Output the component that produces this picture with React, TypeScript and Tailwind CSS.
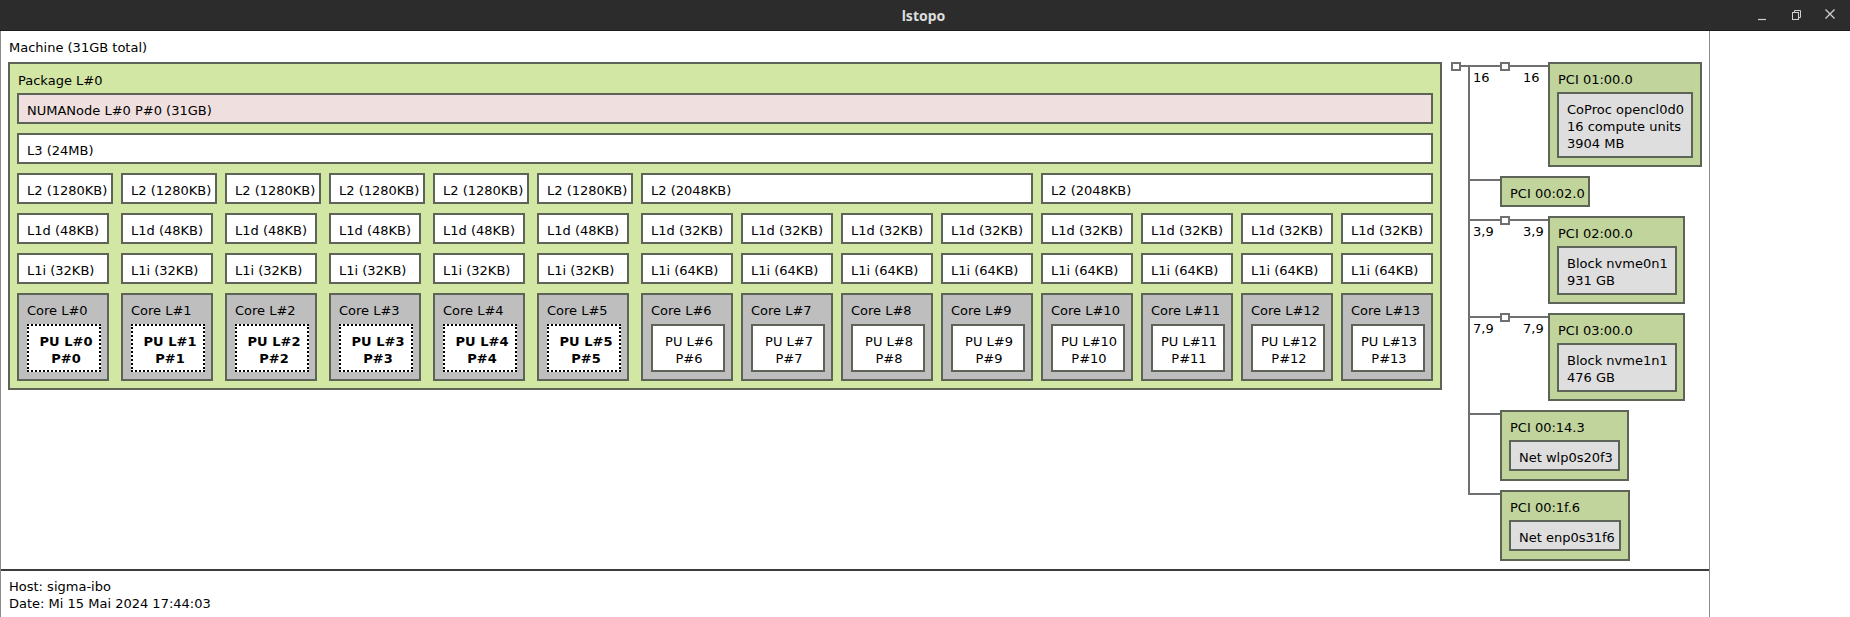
import React from "react";

const edge = "border-2 border-[#5d6356]";

const Cache = ({ label, w }: { label: string; w: string }) => (
  <div className={`h-[31px] ${w} ${edge} bg-white pl-[8px] pt-[8px] whitespace-nowrap`}>
    {label}
  </div>
);

const Core = ({ n }: { n: number }) => {
  const bound = n < 6;
  return (
    <div className={`h-[88px] w-[92px] ${edge} bg-[#bebebe] pl-[8px] pt-[8px]`}>
      <div className="whitespace-nowrap">Core L#{n}</div>
      <div
        className={
          bound
            ? "mt-[6px] h-[48px] w-[74px] border-2 border-dotted border-black bg-white pl-[4px] pt-[7px] text-center font-bold leading-[17px]"
            : "mt-[6px] h-[48px] w-[74px] border-2 border-[#5d6356] bg-white pl-[2px] pt-[7px] text-center leading-[17px]"
        }
      >
        <div>PU L#{n}</div>
        <div>P#{n}</div>
      </div>
    </div>
  );
};

const PCore = ({ n }: { n: number }) => (
  <div className="flex w-[96px] flex-col gap-[9px]">
    <Cache label="L2 (1280KB)" w="w-[96px]" />
    <Cache label="L1d (48KB)" w="w-[92px]" />
    <Cache label="L1i (32KB)" w="w-[92px]" />
    <Core n={n} />
  </div>
);

const ECluster = ({ cores }: { cores: number[] }) => (
  <div className="flex w-[392px] flex-col gap-[9px]">
    <Cache label="L2 (2048KB)" w="w-full" />
    <div className="flex gap-2">
      {cores.map((n) => (
        <div key={n} className="flex w-[92px] flex-col gap-[9px]">
          <Cache label="L1d (32KB)" w="w-[92px]" />
          <Cache label="L1i (64KB)" w="w-[92px]" />
          <Core n={n} />
        </div>
      ))}
    </div>
  </div>
);

const Package = () => (
  <div className={`w-[1434px] ${edge} bg-[#d2e7a4] px-[7px] pt-[9px] pb-[7px]`}>
    <div className="mb-[5px] ml-px">Package L#0</div>
    <div className="flex flex-col gap-[9px]">
      <div className={`h-[31px] w-full ${edge} bg-[#efdfde] pl-[8px] pt-[8px]`}>
        NUMANode L#0 P#0 (31GB)
      </div>
      <Cache label="L3 (24MB)" w="w-full" />
      <div className="flex gap-2">
        {[0, 1, 2, 3, 4, 5].map((n) => (
          <PCore key={n} n={n} />
        ))}
        <ECluster cores={[6, 7, 8, 9]} />
        <ECluster cores={[10, 11, 12, 13]} />
      </div>
    </div>
  </div>
);

// connector from the vertical trunk to one PCI box
const Branch = ({
  bridge,
  speed,
  first,
  last,
  children,
}: {
  bridge?: boolean;
  speed?: string;
  first?: boolean;
  last?: boolean;
  children: React.ReactNode;
}) => (
  <div className="flex">
    <div className={`relative shrink-0 ${bridge ? "w-[80px]" : "w-[32px]"}`}>
      <div
        className={`absolute left-0 w-[2px] bg-[#707070] ${
          first ? "top-[3px] bottom-0" : last ? "top-0 h-[5px]" : "top-0 bottom-0"
        }`}
      />
      <div className="absolute left-0 right-0 top-[3px] h-[2px] bg-[#707070]" />
      {bridge && (
        <>
          <div className="absolute left-[32px] top-0 h-[9px] w-[10px] border-2 border-[#707070] bg-white" />
          <span className="absolute left-[5px] top-[8px]">{speed}</span>
          <span className="absolute left-[55px] top-[8px]">{speed}</span>
        </>
      )}
    </div>
    <div className={last ? "" : "pb-[9px]"}>{children}</div>
  </div>
);

const Pci = ({
  title,
  w,
  h,
  children,
}: {
  title: string;
  w: string;
  h: string;
  children?: React.ReactNode;
}) => (
  <div className={`${w} ${h} ${edge} bg-[#c1d49b] pl-[7px] pt-[8px]`}>
    <div className="ml-px whitespace-nowrap">{title}</div>
    {children}
  </div>
);

const OsDev = ({ w, h, lines }: { w: string; h: string; lines: string[] }) => (
  <div className={`mt-[5px] ${w} ${h} ${edge} bg-[#dedede] pl-[8px] pt-[7px] leading-[17px] whitespace-nowrap`}>
    {lines.map((l) => (
      <div key={l}>{l}</div>
    ))}
  </div>
);

const IoTree = () => (
  <div className="flex">
    <div className="relative h-[9px] w-[17px] shrink-0">
      <div className="absolute left-[10px] top-[3px] h-[2px] w-[7px] bg-[#707070]" />
      <div className="absolute left-0 top-0 h-[9px] w-[10px] border-2 border-[#707070] bg-white" />
    </div>
    <div className="flex flex-col">
      <Branch bridge speed="16" first>
        <Pci title="PCI 01:00.0" w="w-[154px]" h="h-[105px]">
          <OsDev w="w-[136px]" h="h-[66px]" lines={["CoProc opencl0d0", "16 compute units", "3904 MB"]} />
        </Pci>
      </Branch>
      <Branch>
        <Pci title="PCI 00:02.0" w="w-[90px]" h="h-[31px]" />
      </Branch>
      <Branch bridge speed="3,9">
        <Pci title="PCI 02:00.0" w="w-[137px]" h="h-[88px]">
          <OsDev w="w-[120px]" h="h-[49px]" lines={["Block nvme0n1", "931 GB"]} />
        </Pci>
      </Branch>
      <Branch bridge speed="7,9">
        <Pci title="PCI 03:00.0" w="w-[137px]" h="h-[88px]">
          <OsDev w="w-[120px]" h="h-[49px]" lines={["Block nvme1n1", "476 GB"]} />
        </Pci>
      </Branch>
      <Branch>
        <Pci title="PCI 00:14.3" w="w-[129px]" h="h-[71px]">
          <OsDev w="w-[111px]" h="h-[31px]" lines={["Net wlp0s20f3"]} />
        </Pci>
      </Branch>
      <Branch last>
        <Pci title="PCI 00:1f.6" w="w-[130px]" h="h-[71px]">
          <OsDev w="w-[112px]" h="h-[31px]" lines={["Net enp0s31f6"]} />
        </Pci>
      </Branch>
    </div>
  </div>
);

const TitleBar = () => (
  <div className="flex h-[31px] items-center border-b border-[#1c1c1c] bg-[#2c2c2c] text-[#dcdcdc]">
    <div className="flex-1" />
    <span className="font-['Noto_Sans',sans-serif] text-[14px] font-bold">lstopo</span>
    <div className="flex flex-1 justify-end pr-[3px]">
      <div className="flex w-[34px] justify-center">
        <svg width="12" height="12" viewBox="0 0 12 12" className="mt-[2px]">
          <path d="M2 9.5h8" stroke="#d0d0d0" strokeWidth="1.2" />
        </svg>
      </div>
      <div className="flex w-[34px] justify-center">
        <svg width="12" height="12" viewBox="0 0 12 12">
          <rect x="2.5" y="4.5" width="6" height="7" fill="none" stroke="#d0d0d0" strokeWidth="1" />
          <path d="M4.5 4.5V2.5h6v7h-2" fill="none" stroke="#d0d0d0" strokeWidth="1" />
        </svg>
      </div>
      <div className="flex w-[34px] justify-center">
        <svg width="12" height="12" viewBox="0 0 12 12">
          <path d="M1.5 1.5l9 9M10.5 1.5l-9 9" stroke="#d0d0d0" strokeWidth="1.3" />
        </svg>
      </div>
    </div>
  </div>
);

export default function App() {
  return (
    <div className="h-[617px] w-[1850px] overflow-hidden bg-white font-['DejaVu_Sans',sans-serif] text-[13px] leading-[15px] text-black">
      <TitleBar />
      <div className="flex h-[586px]">
        <div className="flex w-[1710px] flex-col border-x border-[#8c8c8c]">
          <div className="h-[540px] border-b-2 border-[#3c3c3c] pl-[7px] pt-[9px]">
            <div className="ml-px">Machine (31GB total)</div>
            <div className="mt-[7px] flex items-start gap-[9px]">
              <Package />
              <IoTree />
            </div>
          </div>
          <div className="pl-[8px] pt-[7px] leading-[17px]">
            <div>Host: sigma-ibo</div>
            <div>Date: Mi 15 Mai 2024 17:44:03</div>
          </div>
        </div>
      </div>
    </div>
  );
}
